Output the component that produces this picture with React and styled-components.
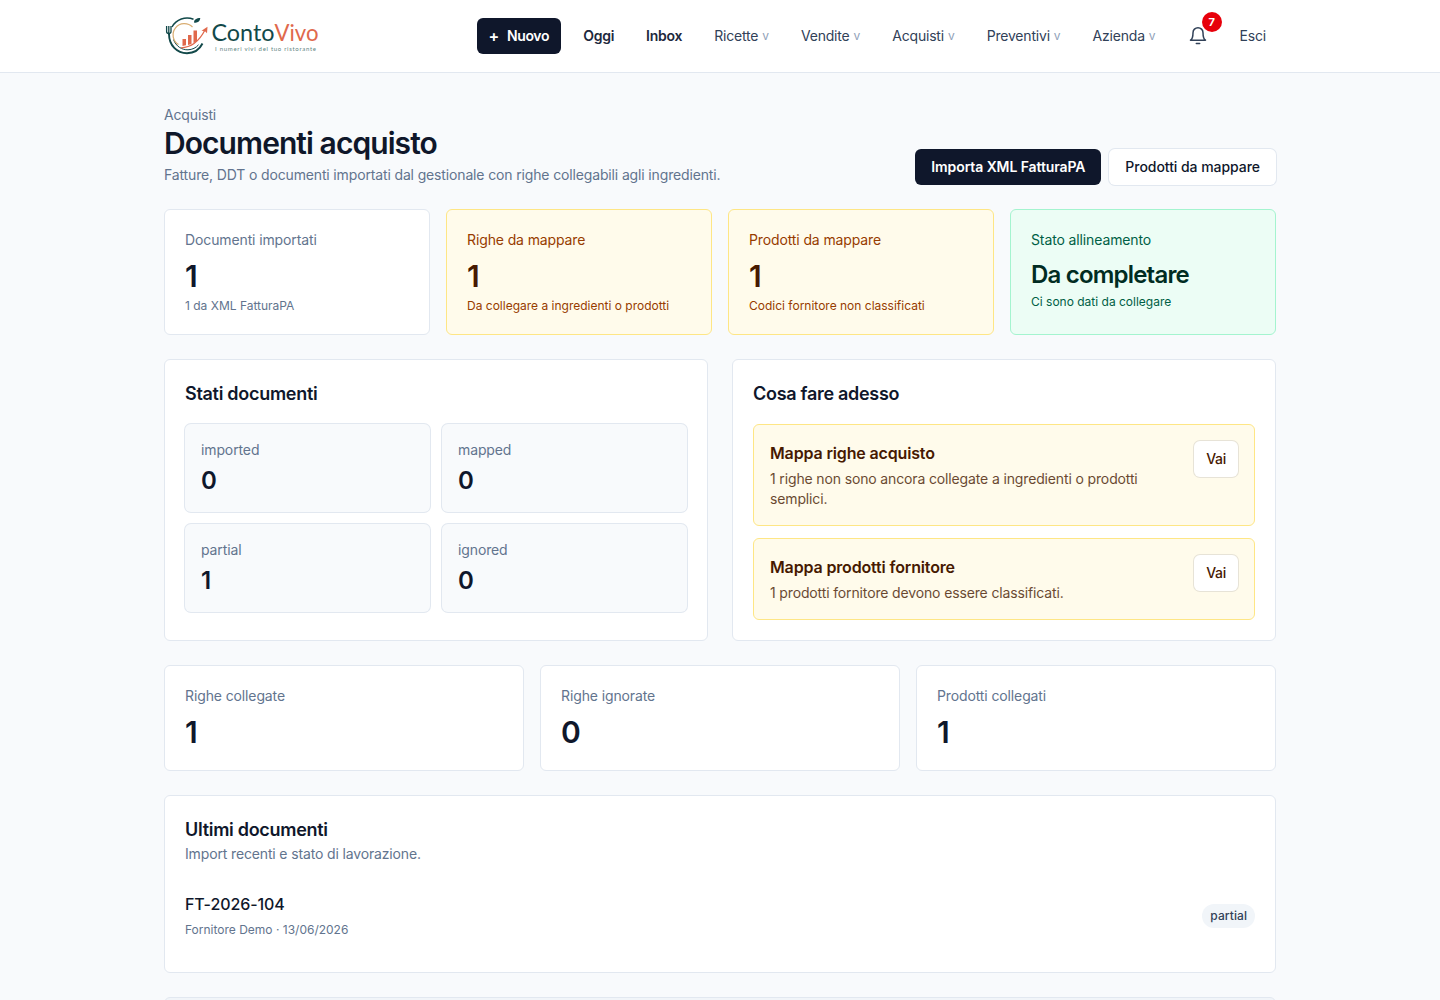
import React from 'react';
import styled, { createGlobalStyle } from 'styled-components';

const GlobalStyle = createGlobalStyle`
	* {
		box-sizing: border-box;
	}
	body {
		margin: 0;
		background: #f8fafc;
		color: #0f172a;
		font-family: Inter, 'Liberation Sans', sans-serif;
		font-size: 16px;
		line-height: 24px;
		-webkit-font-smoothing: antialiased;
	}
	h1, h2, p {
		margin: 0;
	}
	a {
		color: inherit;
		text-decoration: none;
	}
`;

const tones = {
	plain: { bg: '#fff', border: '#e2e8f0', text: '#62748e', strong: '#0f172b' },
	warning: { bg: '#fffbeb', border: '#fee685', text: '#973c00', strong: '#461901' },
	success: { bg: '#ecfdf5', border: '#a4f4cf', text: '#006045', strong: '#002c22' },
};

const Page = styled.div`
	height: 100vh;
	overflow: hidden;
`;

const Header = styled.header`
	background: #fff;
	border-bottom: 1px solid #e2e8f0;
`;

const HeaderInner = styled.div`
	max-width: 1152px;
	height: 72px;
	margin: 0 auto;
	padding: 0 20px;
	display: flex;
	align-items: center;
	justify-content: space-between;
`;

const Brand = styled.a`
	display: flex;
	svg {
		display: block;
	}
`;

const Nav = styled.nav`
	display: flex;
	align-items: center;
	gap: 12px;
	font-size: 14px;
	line-height: 20px;
	letter-spacing: -0.2px;
`;

const NavLink = styled.a`
	display: flex;
	gap: 4px;
	padding: 8px 10px;
	color: ${({ $strong }) => ($strong ? '#1d293d' : '#314158')};
	font-weight: ${({ $strong }) => ($strong ? 600 : 400)};
	letter-spacing: ${({ $strong }) => ($strong ? '-0.25px' : 'inherit')};
`;

const Caret = styled.span`
	font-size: 12px;
	letter-spacing: 0;
	color: #90a1b9;
`;

const NewButton = styled.button`
	display: flex;
	align-items: center;
	gap: 8px;
	height: 36px;
	padding: 0 12px;
	border: 0;
	border-radius: 6px;
	background: #0f172b;
	color: #fff;
	font: 600 14px/20px Inter, sans-serif;
	letter-spacing: -0.35px;
`;

const Plus = styled.span`
	font-size: 16px;
`;

const Bell = styled.a`
	position: relative;
	display: flex;
	align-items: center;
	justify-content: center;
	width: 40px;
	height: 40px;
	color: #314158;
`;

const Counter = styled.span`
	position: absolute;
	top: -4px;
	right: -4px;
	width: 20px;
	height: 20px;
	border-radius: 50%;
	background: #e7000b;
	color: #fff;
	font-size: 11px;
	font-weight: 700;
	line-height: 21px;
	text-align: center;
`;

const Main = styled.main`
	max-width: 1152px;
	margin: 0 auto;
	padding: 32px 20px 0;
	display: flex;
	flex-direction: column;
	gap: 24px;
`;

const PageHead = styled.div`
	display: flex;
	align-items: flex-end;
	justify-content: space-between;
`;

const Muted = styled.p`
	font-size: 14px;
	line-height: 20px;
	letter-spacing: -0.145px;
	color: #62748e;
`;

const PageTitle = styled.h1`
	margin-bottom: 4px;
	font-size: 30px;
	line-height: 36px;
	font-weight: 600;
	letter-spacing: -0.93px;
`;

const Actions = styled.div`
	display: flex;
	gap: 8px;
`;

const ActionButton = styled.a`
	padding: 8px 16px;
	border-radius: 6px;
	font-size: 14px;
	line-height: 20px;
	font-weight: ${({ $primary }) => ($primary ? 600 : 500)};
	letter-spacing: ${({ $primary }) => ($primary ? '-0.1px' : '-0.05px')};
	background: ${({ $primary }) => ($primary ? '#0f172b' : '#fff')};
	color: ${({ $primary }) => ($primary ? '#fff' : '#0f172b')};
	box-shadow: ${({ $primary }) => ($primary ? 'none' : '0 0 0 1px #e2e8f0')};
`;

const Grid = styled.div`
	display: grid;
	grid-template-columns: repeat(${({ $cols }) => $cols}, minmax(0, 1fr));
	gap: ${({ $gap }) => $gap || 16}px;
`;

const Card = styled.section`
	padding: 20px;
	border: 1px solid ${({ $tone }) => tones[$tone || 'plain'].border};
	border-radius: 6px;
	background: ${({ $tone }) => tones[$tone || 'plain'].bg};
	color: ${({ $tone }) => tones[$tone || 'plain'].text};
`;

const Label = styled.p`
	font-size: 14px;
	line-height: 20px;
	letter-spacing: -0.12px;
`;

const Value = styled.p`
	margin-top: 8px;
	padding-top: ${({ $small }) => ($small ? 2 : 0)}px;
	font-size: ${({ $small }) => ($small ? 24 : 30)}px;
	line-height: ${({ $small }) => ($small ? 30 : 36)}px;
	letter-spacing: ${({ $small }) => ($small ? '-0.8px' : 'normal')};
	font-weight: 600;
	color: ${({ $tone }) => tones[$tone || 'plain'].strong};
`;

const Note = styled.p`
	margin-top: 4px;
	font-size: 12px;
	line-height: 16px;
`;

const CardTitle = styled.h2`
	font-size: 18px;
	line-height: 28px;
	font-weight: 600;
	letter-spacing: -0.29px;
	color: #0f172b;
`;

const StatusGrid = styled(Grid)`
	margin-top: 16px;
`;

const StatusBox = styled.div`
	padding: 16px;
	border-radius: 6px;
	background: #f8fafc;
	box-shadow: 0 0 0 1px #e2e8f0;
`;

const StatusValue = styled.p`
	margin-top: 4px;
	padding-top: 2px;
	font-size: 24px;
	line-height: 30px;
	font-weight: 600;
	color: #0f172b;
`;

const TaskList = styled.div`
	margin-top: 16px;
	display: flex;
	flex-direction: column;
	gap: 12px;
`;

const Task = styled.div`
	display: flex;
	align-items: flex-start;
	justify-content: space-between;
	gap: 16px;
	padding: 16px;
	border: 1px solid #fee685;
	border-radius: 6px;
	background: #fffbeb;
	color: #461901;
`;

const TaskTitle = styled.p`
	font-weight: 600;
	letter-spacing: -0.15px;
`;

const TaskText = styled.p`
	margin-top: 4px;
	font-size: 14px;
	line-height: 20px;
	letter-spacing: -0.14px;
	opacity: 0.8;
`;

const GoLink = styled.a`
	flex-shrink: 0;
	padding: 8px 12px;
	border-radius: 6px;
	background: #fff;
	box-shadow: 0 0 0 1px rgba(15, 23, 42, 0.1);
	font-size: 14px;
	line-height: 20px;
	font-weight: 500;
	letter-spacing: -0.3px;
`;

const DocumentRow = styled.div`
	margin-top: 16px;
	padding: 12px 0;
	display: flex;
	align-items: center;
	justify-content: space-between;
`;

const DocumentName = styled.p`
	font-weight: 500;
	letter-spacing: -0.1px;
	color: #0f172b;
`;

const DocumentMeta = styled.p`
	margin-top: 4px;
	font-size: 12px;
	line-height: 20px;
`;

const Pill = styled.span`
	padding: 4px 8px;
	border-radius: 12px;
	background: #f1f5f9;
	color: #314158;
	font-size: 12px;
	line-height: 16px;
	font-weight: 500;
	letter-spacing: 0.08px;
`;

const TableCard = styled.section`
	height: 200px;
	border: 1px solid #e2e8f0;
	border-radius: 6px;
	background: #f1f5f9;
`;

const menus = ['Ricette', 'Vendite', 'Acquisti', 'Preventivi', 'Azienda'];

const stats = [
	{ label: 'Documenti importati', value: '1', note: '1 da XML FatturaPA' },
	{ label: 'Righe da mappare', value: '1', note: 'Da collegare a ingredienti o prodotti', tone: 'warning' },
	{ label: 'Prodotti da mappare', value: '1', note: 'Codici fornitore non classificati', tone: 'warning' },
	{ label: 'Stato allineamento', value: 'Da completare', note: 'Ci sono dati da collegare', tone: 'success', small: true },
];

const statuses = [
	['imported', 0],
	['mapped', 0],
	['partial', 1],
	['ignored', 0],
];

const tasks = [
	['Mappa righe acquisto', '1 righe non sono ancora collegate a ingredienti o prodotti semplici.'],
	['Mappa prodotti fornitore', '1 prodotti fornitore devono essere classificati.'],
];

const totals = [
	['Righe collegate', 1],
	['Righe ignorate', 0],
	['Prodotti collegati', 1],
];

function Logo() {
	return (
		<svg width="160" height="44" viewBox="0 0 160 44" fill="none">
			{/* plate */}
			<path d="M29.500 5.300A17.200 17.200 0 0 0 8 13" stroke="#12494a" strokeWidth="1.500" />
			<path d="M5 20C5 31.500 13 39.200 23 39.200c7 0 12.500-3.700 15.500-9.700" stroke="#12494a" strokeWidth="1.900" />
			<path d="M9.500 25.500C12 32.500 18 36 24 35.800c4.500-.2 8-2 10.500-5" stroke="#12494a" strokeWidth="1" />
			<path d="M28.500 13A11.300 11.300 0 1 0 14.500 30.500" stroke="#d9ad72" strokeWidth="1.200" />
			<path d="M30 8.500c0-2.800 2.500-4.500 6.300-4.500C36 7.300 33.500 9.300 30 8.500Z" fill="#12494a" />
			{/* fork */}
			<path d="M2.600 12v5.500q0 2 2.200 2t2.200-2V12M4.800 12v9" stroke="#12494a" strokeWidth="1.300" />
			{/* chart */}
			<path d="M18.500 25H22v6.300l-3.500.7zM24 21h3.500v9L24 31zM29.500 16.500H33V27l-3.500 2.300z" fill="#e0694c" />
			<path d="M17 33.800C27 33.500 35 27.500 41 16" stroke="#e0694c" strokeWidth="1.300" />
			<path d="m37.500 16.800 6-4-.5 6.500-2-2z" fill="#e0694c" />
			<text x="47.500" y="26.700" fontFamily="Lato, sans-serif" fontSize="23" fill="#12494a" textLength="63" lengthAdjust="spacingAndGlyphs">
				Conto
			</text>
			<text x="110.500" y="26.700" fontFamily="Lato, sans-serif" fontSize="23" fill="#e0694c" textLength="44" lengthAdjust="spacingAndGlyphs">
				Vivo
			</text>
			<text x="51" y="37" fontFamily="Lato, sans-serif" fontSize="6" fill="#5f8584" textLength="101">
				I numeri vivi del tuo ristorante
			</text>
		</svg>
	);
}

function BellIcon() {
	return (
		<svg width="20" height="20" viewBox="0 0 24 24" fill="none" stroke="currentColor" strokeWidth="1.800" strokeLinecap="round" strokeLinejoin="round">
			<path d="M6 8a6 6 0 0 1 12 0c0 7 3 9 3 9H3s3-2 3-9" />
			<path d="M10 21h4" />
		</svg>
	);
}

function App() {
	return (
		<Page>
			<GlobalStyle />
			<Header>
				<HeaderInner>
					<Brand href="#">
						<Logo />
					</Brand>
					<Nav>
						<NewButton>
							<Plus>+</Plus>
							<span>Nuovo</span>
						</NewButton>
						<NavLink href="#" $strong>
							Oggi
						</NavLink>
						<NavLink href="#" $strong>
							Inbox
						</NavLink>
						{menus.map((menu) => (
							<NavLink href="#" key={menu}>
								{menu} <Caret>v</Caret>
							</NavLink>
						))}
						<Bell href="#">
							<BellIcon />
							<Counter>7</Counter>
						</Bell>
						<NavLink href="#">Esci</NavLink>
					</Nav>
				</HeaderInner>
			</Header>

			<Main>
				<PageHead>
					<div>
						<Muted>Acquisti</Muted>
						<PageTitle>Documenti acquisto</PageTitle>
						<Muted>Fatture, DDT o documenti importati dal gestionale con righe collegabili agli ingredienti.</Muted>
					</div>
					<Actions>
						<ActionButton href="#" $primary>
							Importa XML FatturaPA
						</ActionButton>
						<ActionButton href="#">Prodotti da mappare</ActionButton>
					</Actions>
				</PageHead>

				<Grid $cols={4}>
					{stats.map(({ label, value, note, tone, small }) => (
						<Card key={label} $tone={tone}>
							<Label>{label}</Label>
							<Value $tone={tone} $small={small}>
								{value}
							</Value>
							<Note>{note}</Note>
						</Card>
					))}
				</Grid>

				<Grid $cols={2} $gap={24}>
					<Card>
						<CardTitle>Stati documenti</CardTitle>
						<StatusGrid $cols={2} $gap={12}>
							{statuses.map(([name, count]) => (
								<StatusBox key={name}>
									<Label>{name}</Label>
									<StatusValue>{count}</StatusValue>
								</StatusBox>
							))}
						</StatusGrid>
					</Card>
					<Card>
						<CardTitle>Cosa fare adesso</CardTitle>
						<TaskList>
							{tasks.map(([title, text]) => (
								<Task key={title}>
									<div>
										<TaskTitle>{title}</TaskTitle>
										<TaskText>{text}</TaskText>
									</div>
									<GoLink href="#">Vai</GoLink>
								</Task>
							))}
						</TaskList>
					</Card>
				</Grid>

				<Grid $cols={3}>
					{totals.map(([label, value]) => (
						<Card key={label}>
							<Label>{label}</Label>
							<Value>{value}</Value>
						</Card>
					))}
				</Grid>

				<Card>
					<CardTitle>Ultimi documenti</CardTitle>
					<Muted>Import recenti e stato di lavorazione.</Muted>
					<DocumentRow>
						<div>
							<DocumentName>FT-2026-104</DocumentName>
							<DocumentMeta>Fornitore Demo · 13/06/2026</DocumentMeta>
						</div>
						<Pill>partial</Pill>
					</DocumentRow>
				</Card>

				<TableCard />
			</Main>
		</Page>
	);
}

export default App;
